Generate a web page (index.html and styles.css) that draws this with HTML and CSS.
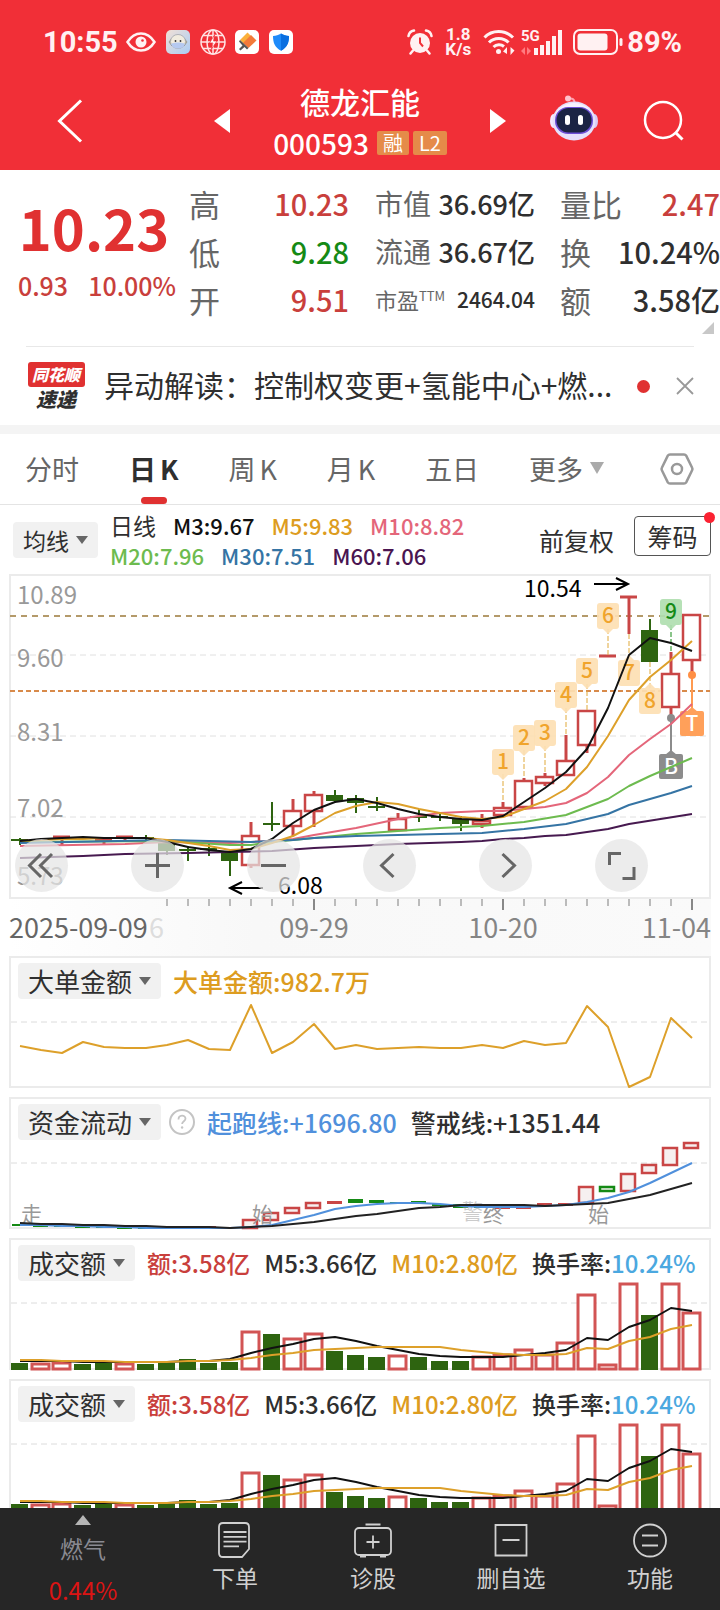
FILE: index.html
```html
<!DOCTYPE html>
<html lang="zh-CN">
<head>
<meta charset="utf-8">
<meta name="viewport" content="width=device-width, initial-scale=1">
<title>德龙汇能 000593</title>
<link rel="stylesheet" href="styles.css">
</head>
<body>
<header class="top">
  <div class="status">
    <span class="clock">10:55</span>
    <svg class="st-eye" viewBox="0 0 30 20"><path d="M1.500 10C5 4.500 9.500 1.500 15 1.500S25 4.500 28.500 10C25 15.500 20.500 18.500 15 18.500S5 15.500 1.500 10z" fill="none" stroke="#fff1f2" stroke-width="2.500"/><circle cx="15" cy="10" r="5.500" fill="#fff1f2"/><circle cx="16.500" cy="8.500" r="1.300" fill="#f12f37"/></svg>
    <svg class="st-app" viewBox="0 0 24 24"><defs><linearGradient id="appBg" x1="0" y1="0" x2="1" y2="1"><stop offset="0" stop-color="#f2e0d5"/><stop offset="1" stop-color="#a9cdf5"/></linearGradient></defs><rect width="24" height="24" rx="5" fill="url(#appBg)"/><path d="M3 12l3-4v8zM21 12l-3-4v8z" fill="#ddd3a9" stroke="#777" stroke-width=".6"/><ellipse cx="12" cy="11.500" rx="7.500" ry="7" fill="#f1ecdf" stroke="#8b8f98" stroke-width=".6"/><path d="M5 14c3-2 11-2 14 0-1 3-4 4.500-7 4.500S6 17 5 14z" fill="#b5c9f0"/><circle cx="9.500" cy="11" r=".9" fill="#333"/><circle cx="14.500" cy="11" r=".9" fill="#333"/></svg>
    <svg class="st-globe" viewBox="0 0 26 26"><g fill="none" stroke="#ffe3e4" stroke-width="1.500"><circle cx="13" cy="13" r="12"/><ellipse cx="13" cy="13" rx="6" ry="12"/><path d="M1 13h24M3 6.500h20M3 19.500h20M13 1v24"/></g><path d="M14.500 6l-5 8h3.500l-1.500 6 5.500-8h-3.500z" fill="#fff" stroke="#f12f37" stroke-width=".7"/></svg>
    <svg class="st-app" viewBox="0 0 24 24"><rect width="24" height="24" rx="5" fill="#fff"/><path d="M5 10L12.500 2.500 16 6 8.500 13.500z" fill="#fbb03b"/><path d="M8 13l8-8 5.500 5.500L13.500 18z" fill="#f2793a"/><path d="M5 10l8.500 8-1.500 1.500L9.500 17 5.500 20.500 4 19l3.500-3.500L4 11.500z" fill="#555"/></svg>
    <svg class="st-app" viewBox="0 0 24 24"><rect width="24" height="24" rx="5" fill="#fff"/><path d="M12 3.500c2.500 1.800 5 2.300 8 2.500 0 7-2 11.500-8 14.800C6 17.500 4 13 4 6c3-.2 5.500-.7 8-2.500z" fill="#1e8bfa"/><path d="M12 3.500c2.500 1.800 5 2.300 8 2.500 0 7-2 11.500-8 14.800z" fill="#0a6fe0"/></svg>
    <span class="status-gap"></span>
    <svg class="st-alarm" viewBox="0 0 26 26"><circle cx="13" cy="14" r="10" fill="#fff1f2"/><path d="M13 8.500V14l3 3.500" fill="none" stroke="#f12f37" stroke-width="2"/><path d="M1.500 7C2 4 4 2 7 1.500M24.500 7C24 4 22 2 19 1.500M6 21.500L3.500 24.500M20 21.500l2.500 3" fill="none" stroke="#fff1f2" stroke-width="2.500" stroke-linecap="round"/></svg>
    <span class="speed">1.8<br>K/s</span>
    <svg class="st-wifi" viewBox="0 0 32 26"><g fill="none" stroke="#fff1f2" stroke-width="3"><path d="M1.500 8.500C9 .5 22 .5 30 8.500"/><path d="M6 13.500c5-5.500 14.500-5.500 19.500 0"/><path d="M10.500 18c3-3 7.500-3 10.500-.5"/></g><circle cx="15.500" cy="22.500" r="2.500" fill="#fff1f2"/><path d="M20 22.500l4-4.500v7zM31.500 21.500L27.500 26v-8z" fill="#fff1f2"/></svg>
    <svg class="st-signal" viewBox="0 0 42 28"><text x="0" y="13" class="sig-text">5G</text><g fill="#fff1f2"><rect x="13" y="20" width="4" height="7"/><rect x="19" y="17" width="4" height="10"/><rect x="25" y="13" width="4" height="14"/><rect x="31" y="8" width="4" height="19"/><rect x="37" y="2" width="4" height="25"/></g><path d="M0 23l4-4v8zM10 23l-4-4v8z" fill="#ff7b80"/></svg>
    <svg class="st-batt" viewBox="0 0 50 26"><rect x="1" y="1" width="43" height="24" rx="6" fill="none" stroke="#fff1f2" stroke-width="2"/><rect x="4.500" y="4.500" width="30" height="17" rx="3" fill="#fff1f2"/><rect x="46.500" y="9" width="3" height="8" rx="1.500" fill="#fff1f2"/></svg>
    <span class="percent">89%</span>
  </div>
  <div class="titlebar">
    <button class="icon-btn" aria-label="返回"><svg class="ic-back" viewBox="0 0 26 44"><path d="M24 1.500L2.500 22 24 42.500" fill="none" stroke="#fff" stroke-width="3"/></svg></button>
    <button class="icon-btn" aria-label="上一只"><svg class="ic-tri" viewBox="0 0 16 24"><path d="M16 0v24L0 12z" fill="#fff"/></svg></button>
    <div class="stock">
      <h1 class="name">德龙汇能</h1>
      <p class="code"><span>000593</span><span class="badge">融</span><span class="badge">L2</span></p>
    </div>
    <button class="icon-btn" aria-label="下一只"><svg class="ic-tri" viewBox="0 0 16 24"><path d="M0 0v24L16 12z" fill="#fff"/></svg></button>
    <button class="icon-btn" aria-label="助手"><svg class="ic-bot" viewBox="0 0 48 46"><path d="M18 4c4-1.500 7 0 6.500 5" fill="none" stroke="#ff9fae" stroke-width="2"/><circle cx="18" cy="3.500" r="3" fill="#ffc3cc"/><ellipse cx="3.500" cy="26" rx="3.500" ry="7" fill="#f3eaff"/><ellipse cx="44.500" cy="26" rx="3.500" ry="7" fill="#d9ccf5"/><ellipse cx="24" cy="26" rx="21.500" ry="19.500" fill="#e6e0fb"/><ellipse cx="24" cy="23" rx="19" ry="15" fill="#f7f3ff"/><rect x="5" y="12" width="38" height="27" rx="13" fill="#6d4fd6"/><rect x="6.500" y="13" width="35" height="24.500" rx="12" fill="#1b2444"/><rect x="15" y="20" width="5" height="10" rx="2.500" fill="#fff"/><rect x="28" y="20" width="5" height="10" rx="2.500" fill="#fff"/></svg></button>
    <button class="icon-btn" aria-label="搜索"><svg class="ic-search" viewBox="0 0 42 42"><circle cx="20" cy="20" r="18" fill="none" stroke="#fff" stroke-width="2.500"/><path d="M32.500 32.500l7 7" stroke="#fff" stroke-width="3"/></svg></button>
  </div>
</header>

<main>
  <section class="quote">
    <div class="price">
      <p class="last">10.23</p>
      <p class="change"><span>0.93</span><span>10.00%</span></p>
    </div>
    <dl class="stats stats-a">
      <div><dt>高</dt><dd class="up">10.23</dd></div>
      <div><dt>低</dt><dd class="down">9.28</dd></div>
      <div><dt>开</dt><dd class="up">9.51</dd></div>
    </dl>
    <dl class="stats stats-b">
      <div><dt>市值</dt><dd>36.69亿</dd></div>
      <div><dt>流通</dt><dd>36.67亿</dd></div>
      <div class="small"><dt>市盈<sup>TTM</sup></dt><dd>2464.04</dd></div>
    </dl>
    <dl class="stats stats-c">
      <div><dt>量比</dt><dd class="up">2.47</dd></div>
      <div><dt>换</dt><dd>10.24%</dd></div>
      <div><dt>额</dt><dd>3.58亿</dd></div>
    </dl>
    <span class="corner"></span>
  </section>

  <section class="news">
    <div class="news-logo"><span class="logo-top">同花顺</span><span class="logo-bottom">速递</span></div>
    <a class="news-text" href="#">异动解读：控制权变更+氢能中心+燃...</a>
    <span class="news-dot"></span>
    <button class="icon-btn" aria-label="关闭"><svg class="ic-close" viewBox="0 0 18 18"><path d="M1 1l16 16M17 1L1 17" stroke="#999" stroke-width="1.800"/></svg></button>
  </section>

  <nav class="tabs">
    <button class="tab">分时</button>
    <button class="tab tab-on">日<span class="k">K</span></button>
    <button class="tab">周<span class="k">K</span></button>
    <button class="tab">月<span class="k">K</span></button>
    <button class="tab">五日</button>
    <button class="tab tab-more">更多<i class="caret caret-big"></i></button>
    <button class="icon-btn settings" aria-label="设置"><svg class="ic-hex" viewBox="0 0 34 32"><path d="M10 1.500h14q1.500 0 2.200 1.200L32 14.500q.8 1.500 0 3L26.200 29.300q-.7 1.200-2.200 1.200H10q-1.500 0-2.200-1.200L2 17.500q-.8-1.500 0-3L7.800 2.700Q8.500 1.500 10 1.500z" fill="none" stroke="#999" stroke-width="2.500"/><circle cx="17" cy="16" r="5" fill="none" stroke="#999" stroke-width="2.500"/></svg></button>
  </nav>

  <section class="legend">
    <button class="pick">均线<i class="caret"></i></button>
    <div class="ma">
      <p><span class="ma-name">日线</span><span class="c-black">M3:9.67</span><span class="c-gold">M5:9.83</span><span class="c-pink">M10:8.82</span></p>
      <p><span class="c-green">M20:7.96</span><span class="c-blue">M30:7.51</span><span class="c-purple">M60:7.06</span></p>
    </div>
    <span class="adjust">前复权</span>
    <button class="chips">筹码<i class="chips-dot"></i></button>
  </section>

  <section class="kline">
    <svg class="kline-svg" id="kline" viewBox="0 574 720 382" role="img" aria-label="日K线图"></svg>
    <div class="tools">
      <button class="tool" aria-label="最早"><svg viewBox="0 0 53 53"><path d="M26 15L14.500 26.500 26 38M37 15L25.500 26.500 37 38"/></svg></button>
      <button class="tool" aria-label="放大"><svg viewBox="0 0 53 53"><path d="M14 26.500h25M26.500 14v25"/></svg></button>
      <button class="tool" aria-label="缩小"><svg viewBox="0 0 53 53"><path d="M14 26.500h25"/></svg></button>
      <button class="tool" aria-label="左移"><svg viewBox="0 0 53 53"><path d="M30.500 15L18.500 26.500 30.500 38"/></svg></button>
      <button class="tool" aria-label="右移"><svg viewBox="0 0 53 53"><path d="M23.500 15l12 11.500-12 11.500"/></svg></button>
      <button class="tool" aria-label="全屏"><svg viewBox="0 0 53 53"><path d="M14.500 26V14.500H26M39 28v11.500H27.500"/></svg></button>
    </div>
  </section>

  <section class="panel">
    <div class="panel-head"><button class="pick">大单金额<i class="caret"></i></button><span class="c-gold">大单金额:982.7万</span></div>
    <svg class="panel-svg" id="orders" viewBox="11 44 698 86" role="img" aria-label="大单金额"></svg>
  </section>
  <section class="panel">
    <div class="panel-head"><button class="pick">资金流动<i class="caret"></i></button><svg class="ic-help" viewBox="0 0 26 26"><circle cx="13" cy="13" r="12" fill="none" stroke="#c4c4c4" stroke-width="2"/><path d="M9.500 10.500c0-5 7-5 7-.8 0 2.500-3.400 2.500-3.400 5.300" fill="none" stroke="#c4c4c4" stroke-width="1.800"/><circle cx="13.100" cy="18.500" r="1.200" fill="#c4c4c4"/></svg><span class="c-sky">起跑线:+1696.80</span><span>警戒线:+1351.44</span></div>
    <svg class="panel-svg" id="flow" viewBox="11 44 698 86" role="img" aria-label="资金流动"></svg>
  </section>
  <section class="panel">
    <div class="panel-head head-dense"><button class="pick">成交额<i class="caret"></i></button><span class="c-red">额:3.58亿</span><span>M5:3.66亿</span><span class="c-gold">M10:2.80亿</span><span>换手率:<b class="c-cyan">10.24%</b></span></div>
    <svg class="panel-svg volume" viewBox="11 44 698 86" role="img" aria-label="成交额"></svg>
  </section>
  <section class="panel">
    <div class="panel-head head-dense"><button class="pick">成交额<i class="caret"></i></button><span class="c-red">额:3.58亿</span><span>M5:3.66亿</span><span class="c-gold">M10:2.80亿</span><span>换手率:<b class="c-cyan">10.24%</b></span></div>
    <svg class="panel-svg volume" viewBox="11 44 698 86" role="img" aria-label="成交额"></svg>
  </section>
</main>

<nav class="bottom">
  <a class="sector" href="#"><i class="up-tri"></i><span>燃气</span><b>0.44%</b></a>
  <button class="act"><svg viewBox="0 0 36 36"><path d="M6 1h22q4 0 4 4v22l-7 8H6q-4 0-4-4V5q0-4 4-4z"/><path d="M6.500 10h23M6.500 14.800h23M6.500 19.600h23M6.500 24.400H22"/></svg>下单</button>
  <button class="act"><svg viewBox="0 0 38 36"><rect x="1" y="6" width="36" height="27" rx="4"/><path d="M11.500 2.500h15M19 13.500v13M12.500 20h13M6 34.500h6M26 34.500h6"/></svg>诊股</button>
  <button class="act"><svg viewBox="0 0 36 36"><path d="M2.500 3h31v30.500h-31zM9.500 18h17"/></svg>删自选</button>
  <button class="act"><svg viewBox="0 0 36 36"><circle cx="18" cy="18.500" r="16"/><path d="M10 13.500h16M10 23.500h16"/></svg>功能</button>
</nav>
<script src="charts.js"></script>
</body>
</html>
```
FILE: styles.css
```css
:root {
  --num: "Noto Sans CJK SC", sans-serif;
  --cjk: "Noto Sans CJK SC", sans-serif;
  --red: #e03131;
  --ink: #2f2f2f;
  --grey: #666;
}
* { box-sizing: border-box; }
body { margin: 0; padding-bottom: 94px; background: #fff; color: var(--ink); font-family: var(--cjk); }
button { margin: 0; padding: 0; border: 0; background: none; color: inherit; font: inherit; }
p, h1, dl, dd { margin: 0; }
a { color: inherit; text-decoration: none; }
svg { display: block; }
.icon-btn { display: flex; }

.top { height: 170px; padding-top: 24px; background: #f12f37; color: #fff; }
.status { display: flex; align-items: center; height: 36px; padding: 0 38px 0 43px; color: #fff1f2; font-family: "Roboto", sans-serif; font-weight: 700; }
.clock { width: 83px; font-size: 29px; }
.percent { font-size: 29px; margin-left: 4px; }
.status-gap { flex: 1; }
.st-eye { width: 30px; height: 20px; margin-right: 10px; }
.st-app { width: 24px; height: 24px; margin-right: 10px; }
.st-globe { width: 26px; height: 26px; margin-right: 9px; }
.st-alarm { width: 26px; height: 26px; margin-right: 10px; }
.speed { width: 30px; font-size: 17px; line-height: 15px; text-align: center; }
.st-wifi { width: 32px; height: 26px; margin: 0 6px 0 10px; }
.st-signal { width: 42px; height: 28px; margin-right: 10px; }
.sig-text { font-size: 15px; fill: #fff1f2; }
.st-batt { width: 50px; height: 26px; }

.titlebar { display: flex; align-items: center; height: 110px; padding: 12px 35px 0 57px; }
.stock { flex: 1; padding-top: 4px; text-align: center; }
.name { font-size: 30px; line-height: 40px; font-weight: 500; }
.code { display: flex; justify-content: center; align-items: center; gap: 4px; height: 44px; font: 500 28px/44px var(--num); }
.code span:first-child { margin-right: 4px; }
.code .badge { padding: 0 6px; height: 24px; border-radius: 2px; background: #e58b49; font: 20px/24px var(--cjk); }
.ic-back { width: 26px; height: 44px; margin-right: 131px; }
.ic-tri { width: 16px; height: 24px; }
.ic-bot { width: 48px; height: 46px; margin-left: 44px; margin-top: -6px; }
.ic-search { width: 42px; height: 42px; margin-left: 45px; }

.quote { position: relative; display: grid; grid-template-columns: 180fr 195fr 185fr 160fr; padding-top: 9px; height: 176px; }
.price { text-align: center; }
.last { margin-top: 8px; padding-left: 8px; color: var(--red); font: 700 56px/80px var(--num); }
.change { display: flex; justify-content: center; gap: 20px; padding-left: 14px; color: #c93f3c; font: 500 25px/36px var(--num); }
.stats div { display: flex; align-items: center; justify-content: space-between; height: 48px; }
.stats dt { color: var(--grey); font-size: 31px; }
.stats dd { font-family: var(--num); font-size: 29px; font-weight: 500; }
.stats-a { padding: 0 26px 0 9px; }
.stats-b { padding-right: 25px; }
.stats-b dt { font-size: 28px; }
.stats-b dd { font-size: 27px; }
.stats-b .small dt { font-size: 22px; }
.stats-b .small dd { font-size: 21px; }
.stats sup { font-size: 13px; line-height: 0; }
.stats .up { color: #c93f3c; }
.stats .down { color: #158a15; }
.corner { position: absolute; right: 6px; bottom: 12px; border-left: 12px solid transparent; border-bottom: 12px solid #c8c8c8; }

.news { display: flex; align-items: center; height: 79px; margin: 0 26px; border-top: 1px solid #e8e8e8; }
.news-logo { display: flex; flex-direction: column; align-items: center; width: 60px; font-style: italic; font-weight: 900; }
.logo-top { width: 57px; height: 25px; border-radius: 3px; background: var(--red); color: #fff; font-size: 16px; line-height: 24px; text-align: center; }
.logo-bottom { font-size: 20px; line-height: 24px; }
.news-text { flex: 1; margin-left: 18px; padding-bottom: 4px; font-size: 30px; line-height: 44px; white-space: nowrap; overflow: hidden; }
.news-dot { width: 13px; height: 13px; margin-right: 26px; border-radius: 50%; background: var(--red); }
.ic-close { width: 18px; height: 18px; }

.tabs { display: flex; align-items: center; justify-content: space-between; height: 80px; padding: 0 26px 0 25px; border-top: 9px solid #f4f4f4; border-bottom: 1px solid #e4e4e4; color: var(--grey); font-size: 27px; }
.tab { position: relative; height: 70px; padding-bottom: 2px; white-space: nowrap; }
.k { margin-left: 4px; }
.tab-on { color: var(--ink); font-weight: 700; }
.tab-on::after { content: ""; position: absolute; left: 50%; bottom: 0; width: 26px; height: 7px; margin-left: -13px; border-radius: 4px; background: var(--red); }
.tab-more { display: flex; align-items: center; }
.settings { margin-left: 6px; }
.caret { margin-left: 7px; border: 6px solid transparent; border-top: 8px solid #666; border-bottom: 0; }
.caret-big { border: 7px solid transparent; border-top: 12px solid #aaa; border-bottom: 0; }
.ic-hex { width: 34px; height: 32px; }

.legend { display: flex; align-items: center; height: 69px; padding: 0 9px 0 13px; }
.pick { display: flex; align-items: center; height: 36px; padding: 0 10px; border-radius: 4px; background: #f1f1f1; color: var(--ink); font-size: 26px; line-height: 36px; white-space: nowrap; }
.legend .pick { font-size: 23px; }
.ma { flex: 1; margin-left: 12px; font: 500 22px/30px var(--num); white-space: nowrap; }
.ma p { display: flex; gap: 17px; }
.ma-name { font-size: 23px; font-weight: 400; }
.adjust { margin-right: 20px; font-size: 25px; }
.chips { position: relative; width: 77px; height: 40px; margin-bottom: 8px; border: 1px solid #555; border-radius: 4px; font-size: 25px; line-height: 36px; }
.chips-dot { position: absolute; right: -5px; top: -5px; width: 11px; height: 11px; border-radius: 50%; background: #fb2232; }

.c-black { color: #111; }
.c-gold { color: #dd9c20; }
.c-pink { color: #e4667a; }
.c-green { color: #6dbb4f; }
.c-blue { color: #3574a4; }
.c-purple { color: #4a1551; }
.c-sky { color: #5090dc; }
.c-red { color: #c93f3c; }
.c-cyan { color: #4ba8e0; font-weight: 500; }

.kline { position: relative; }
.kline-svg { width: 100%; height: auto; overflow: visible; }
.tools { position: absolute; left: 15px; right: 72px; top: 265px; display: flex; justify-content: space-between; }
.tool { width: 53px; height: 53px; border-radius: 50%; background: rgba(228, 228, 228, .72); }
.tool path { fill: none; stroke: #666; stroke-width: 3; }
.t-axis { font: 24px var(--num); fill: #999; }
.t-date { font: 27px var(--num); fill: #858585; }
.t-date-strong { fill: #666; }
.t-date-faint { fill: #ddd; }
.t-mark { font: 23px var(--num); fill: #000; }
.t-tag { font: 500 21px var(--num); text-anchor: middle; }
.t-flow { font: 21px var(--cjk); fill: #999; }

.panel { margin: 0 9px 9px; border: 2px solid #ebebeb; }
.panel-head { display: flex; align-items: center; height: 42px; padding: 4px 7px 0; font: 500 25px/36px var(--num); white-space: nowrap; }
.panel-head span { margin-left: 12px; }
.panel-head span + span { margin-left: 14px; }
.head-dense { font-size: 24px; }
.panel-head .pick { font-weight: 400; }
.ic-help { width: 26px; height: 26px; margin-left: 8px; }
.panel-svg { width: 100%; height: auto; overflow: visible; }

.bottom { position: fixed; left: 0; right: 0; bottom: 0; display: grid; grid-template-columns: 166fr 138fr 138fr 138fr 140fr; height: 102px; background: #262626; color: #d0d0d0; font-size: 23px; }
.sector { display: flex; flex-direction: column; align-items: center; padding-top: 7px; color: #8a8a92; line-height: 32px; }
.sector span { margin-top: 7px; }
.sector b { margin-top: 10px; color: #dc1414; font: 24px/32px var(--num); }
.up-tri { border: 8px solid transparent; border-top: 0; border-bottom: 10px solid #b5b5b5; }
.act { display: flex; flex-direction: column; align-items: center; padding-top: 14px; line-height: 38px; }
.act svg { height: 36px; width: 38px; fill: none; stroke: #d0d0d0; stroke-width: 1.800; }
```
FILE: charts.js
```js
const RED = '#c94646', GREEN = '#2e6410';
const X = i => 20 + 21 * i;
const line = (x1, y1, x2, y2, c, w = 1, dash = '') =>
  `<path d="M${x1} ${y1}L${x2} ${y2}" stroke="${c}" stroke-width="${w}" stroke-dasharray="${dash}" fill="none"/>`;
// pts: [index, y] pairs
const series = (pts, c, w = 2) =>
  `<polyline points="${pts.map(([i, y]) => X(i) + ',' + y).join(' ')}" fill="none" stroke="${c}" stroke-width="${w}" stroke-linejoin="round"/>`;
const flat = ys => ys.map((y, i) => [i, y]);
const text = (x, y, cls, s, extra = '') => `<text x="${x}" y="${y}" class="${cls}" ${extra}>${s}</text>`;

function drawKline() {
  let s = '<defs><linearGradient id="axisBg" x1="0" x2="1" y1="0" y2="0"><stop offset="0" stop-color="#fff"/><stop offset=".35" stop-color="#f8f8f8"/><stop offset="1" stop-color="#fafafa"/></linearGradient></defs>';
  s += '<rect x="9" y="899" width="702" height="57" fill="url(#axisBg)"/>';
  s += '<rect x="10" y="575" width="700" height="323" fill="#fff" stroke="#ebebeb" stroke-width="2"/>';
  for (const y of [655, 736, 817]) s += line(10, y, 710, y, '#e0e0e0', 1, '6 4');
  [['10.89', 604], ['9.60', 667], ['8.31', 741], ['7.02', 817], ['5.73', 885]]
    .forEach(([t, y]) => { s += text(17, y, 't-axis', t); });
  s += line(10, 616, 710, 616, '#b49a6a', 2, '6 5') + line(10, 691, 710, 691, '#d88a4a', 2, '5 3');

  // [kind, bodyTop, bodyBottom, wickTop, wickBottom]
  const k = [
    ['g', 839, 841, 838, 845], ['g', 839, 840, 838, 842], ['r', 837, 838, 836, 845], ['g', 837, 838, 836, 839],
    ['r', 840, 841, 838, 844], ['r', 837, 838, 837, 840], ['g', 837, 838, 835, 840], ['g', 841, 851, 841, 855],
    ['g', 849, 851, 846, 861], ['g', 848, 850, 844, 856], ['g', 852, 861, 850, 876], ['r', 836, 865, 822, 868],
    ['g', 823, 825, 802, 831], ['r', 811, 826, 799, 836], ['r', 795, 811, 791, 827], ['g', 795, 801, 790, 803],
    ['g', 798, 803, 795, 813], ['g', 806, 808, 797, 811], ['r', 819, 830, 813, 831], ['g', 816, 818, 809, 822],
    ['g', 816, 818, 814, 821], ['g', 819, 824, 816, 831], ['r', 821, 824, 814, 828], ['r', 808, 815, 802, 817],
    ['r', 781, 807, 778, 810], ['r', 777, 783, 773, 786], ['r', 761, 775, 735, 775], ['r', 711, 745, 711, 753],
    ['r', 656, 656, 656, 656], ['r', 597, 597, 597, 634], ['g', 630, 662, 619, 662], ['r', 674, 707, 652, 717],
    ['r', 615, 660, 615, 674]
  ];
  k.forEach(([kind, t, b, wt, wb], i) => {
    const x = X(i);
    if (kind === 'g') {
      s += line(x, wt, x, wb, GREEN, 2) + `<rect x="${x - 9}" y="${t}" width="17" height="${b - t}" fill="${GREEN}"/>`;
    } else if (b - t < 2) {
      s += line(x, wt, x, wb, RED, 3) + line(x - 9, t, x + 8, t, RED, 3);
    } else {
      s += line(x, wt, x, t, RED, 3) + line(x, b, x, wb, RED, 3)
        + `<rect x="${x - 9}" y="${t}" width="17" height="${b - t}" fill="#fff" stroke="${RED}" stroke-width="2.500"/>`;
    }
  });

  // sequence tags: [label, index, boxTop, stemFrom, stemTo, pointsUp]
  const tags = [['1', 23, 749, 774, 802, 0], ['2', 24, 725, 750, 778, 0], ['3', 25, 720, 746, 773, 0], ['4', 26, 682, 708, 735, 0],
    ['5', 27, 658, 684, 710, 0], ['6', 28, 603, 629, 655, 0], ['7', 29, 660, 634, 660, 1], ['8', 30, 688, 662, 688, 1], ['9', 31, 599, 625, 652, 0]];
  for (const [n, i, y, a, b, up] of tags) {
    const x = X(i), green = n === '9', fill = green ? '#b0dfb0' : '#fde0b4';
    const tip = up ? `M${x - 5} ${y}l5 -5 5 5z` : `M${x - 5} ${y + 26}l5 5 5 -5z`;
    s += line(x, a, x, b, green ? '#158a15' : '#e0a93a', 1, '5 2')
      + `<g opacity=".92"><rect x="${x - 11}" y="${y}" width="22" height="26" rx="3" fill="${fill}"/><path d="${tip}" fill="${fill}"/></g>`
      + text(x, y + 20, 't-tag', n, `fill="${green ? '#158a15' : '#f0a42c'}"`);
  }
  s += line(692, 675, 692, 710, '#ff9a50', 2) + '<circle cx="692" cy="675" r="4" fill="#ff8f45"/>'
    + '<path d="M686 712l6-5 6 5z" fill="#ffa05a"/><rect x="680" y="711" width="24" height="25" rx="2" fill="#ffa05a"/>' + text(692, 731, 't-tag', 'T', 'fill="#fff"');
  s += line(671, 718, 671, 752, '#8c8c8c', 2) + '<circle cx="671" cy="718" r="4" fill="#8c8c8c"/>'
    + '<path d="M665 755l6-5 6 5z" fill="#8c8c8c"/><rect x="659" y="754" width="24" height="25" rx="2" fill="#8c8c8c"/>' + text(671, 774, 't-tag', 'B', 'fill="#fff"');

  s += series([[0, 858], [3, 856], [5, 854], [8, 853], [10, 852], [12, 851], [14, 848], [16, 846], [18, 844], [21, 842], [22, 841], [23, 839], [24, 838], [25, 836], [26, 835], [28, 829], [29, 824], [32, 814]], '#471a50');
  s += series([[0, 846], [5, 844], [7, 842], [10, 843], [12, 841], [13, 839], [14, 835], [16, 828], [18, 819], [19, 816], [20, 813], [21, 812], [22, 811], [23, 811], [24, 809], [25, 807], [26, 803], [27, 793], [28, 777], [29, 755], [30, 739], [31, 724], [32, 704]], '#e4667a');
  s += series([[0, 842], [7, 841], [10, 845], [11, 845], [12, 842], [14, 838], [16, 834], [18, 831], [20, 828], [22, 826], [24, 822], [26, 815], [27, 807], [28, 799], [29, 786], [30, 776], [31, 767], [32, 758]], '#6dbb4f');
  s += series([[0, 843], [7, 840], [9, 841], [11, 842], [13, 840], [14, 838], [16, 836], [18, 835], [20, 834], [22, 833], [24, 829], [26, 824], [28, 814], [29, 805], [30, 799], [31, 793], [32, 786]], '#3574a4');
  s += series(flat([841, 840, 839, 839, 838, 838, 838, 840, 843, 846, 850, 849, 843, 836, 825, 813, 806, 802, 804, 809, 813, 817, 819, 817, 809, 801, 789, 767, 736, 700, 677, 660, 641]), '#dda02a');
  s += series(flat([841, 839, 838, 837, 838, 838, 838, 842, 847, 850, 852, 849, 839, 823, 810, 802, 799, 803, 809, 814, 817, 819, 820, 816, 802, 788, 772, 749, 708, 655, 638, 643, 651]), '#111');

  s += text(524, 597, 't-mark', '10.54') + '<path d="M594 584h33M616 578l12 6-12 6" fill="none" stroke="#000" stroke-width="2"/>';
  s += text(278, 894, 't-mark', '6.08') + '<path d="M263 888h-33M242 882l-12 6 12 6" fill="none" stroke="#000" stroke-width="2"/>';
  for (let i = 7; i <= 32; i++) {
    const major = i === 14 || i === 23 || i === 32;
    s += line(X(i), 899, X(i), major ? 910 : 906, major ? '#888' : '#bbb', 2);
  }
  s += text(9, 938, 't-date t-date-strong', '2025-09-09') + text(149, 938, 't-date t-date-faint', '6')
    + text(314, 938, 't-date', '09-29', 'text-anchor="middle"')
    + text(503, 938, 't-date', '10-20', 'text-anchor="middle"') + text(711, 938, 't-date', '11-04', 'text-anchor="end"');
  document.getElementById('kline').innerHTML = s;
}

function drawOrders() {
  document.getElementById('orders').innerHTML = line(11, 66, 709, 66, '#dcdcdc', 1, '6 4')
    + series(flat([90, 94, 97, 86, 91, 92, 92, 89, 84, 93, 94, 49, 97, 86, 68, 93, 89, 93, 92, 91, 92, 92, 89, 92, 85, 89, 87, 50, 71, 131, 121, 62, 82]), '#dda02a');
}

function drawFlow() {
  let s = line(11, 66, 709, 66, '#dcdcdc', 1, '6 4');
  const bars = 'g127-129 g128-130 g128-130 g129-131 g130-131 g130-132 g130-132 g130-131 g130-131 r129-131 r130-131 r123-131 r116-123 r111-116 r106-111 r104-107 g102-106 g103-106 g105-107 g104-106 g107-109 g107-111 g107-111 r110-112 r110-112 r106-109 r106-109 r90-106 g90-94 r77-94 r68-76 r51-68 r46-51'.split(' ');
  bars.forEach((b, i) => {
    const [t, u] = b.slice(1).split('-').map(Number), c = b[0] === 'r' ? RED : '#158a15', x = X(i) - 8;
    s += u - t > 3 && !(b[0] === 'g' && i < 24)
      ? `<rect x="${x}" y="${t}" width="14" height="${u - t}" fill="#f6f0f0" stroke="${c}" stroke-width="2.500"/>`
      : `<rect x="${x}" y="${t}" width="15" height="${u - t}" fill="${c}"/>`;
  });
  s += text(21, 125, 't-flow', '走') + text(252, 125, 't-flow', '始') + text(462, 122, 't-flow', '警', 'opacity=".5"')
    + text(483, 125, 't-flow', '终') + text(588, 125, 't-flow', '始');
  s += series(flat([128, 128, 129, 129, 130, 130, 131, 131, 131, 131, 131, 130, 128, 123, 118, 112, 109, 107, 106, 106, 107, 109, 110, 110, 110, 109, 108, 105, 101, 95, 86, 76, 66]), '#5090dc');
  s += series(flat([126, 127, 127, 128, 128, 129, 129, 130, 130, 130, 131, 130, 129, 127, 125, 122, 119, 117, 114, 111, 110, 108, 108, 108, 108, 109, 108, 107, 106, 102, 98, 92, 86]), '#222');
  document.getElementById('flow').innerHTML = s;
}

function drawVolume(el) {
  let s = line(11, 65, 709, 65, '#dcdcdc', 1, '6 4');
  const bars = 'g125 r126 r125 g126 g125 r126 g126 g125 g121 g125 g124 r94 g96 r101 r96 g113 g117 g119 r118 g119 g123 g123 r119 r117 r112 r117 r105 r57 r127 r46 g77 r46 r75'.split(' ');
  bars.forEach((b, i) => {
    const t = +b.slice(1), x = X(i) - 9;
    s += b[0] === 'g'
      ? `<rect x="${x}" y="${t}" width="17" height="${132 - t}" fill="${GREEN}"/>`
      : `<rect x="${x}" y="${t}" width="17" height="${131 - t}" fill="#fff" stroke="#d25454" stroke-width="3"/>`;
  });
  s += series(flat([123, 123, 123, 124, 124, 124, 124, 124, 123, 123, 121, 115, 110, 106, 101, 99, 103, 108, 112, 116, 118, 119, 119, 119, 117, 115, 112, 100, 102, 89, 82, 70, 73]), '#111');
  s += series(flat([122, 122, 123, 123, 123, 124, 124, 124, 123, 123, 122, 120, 117, 115, 112, 111, 110, 109, 109, 109, 109, 112, 114, 116, 117, 117, 116, 110, 111, 103, 99, 91, 87]), '#dda02a');
  el.innerHTML = s;
}

drawKline();
drawOrders();
drawFlow();
document.querySelectorAll('.volume').forEach(drawVolume);
```
